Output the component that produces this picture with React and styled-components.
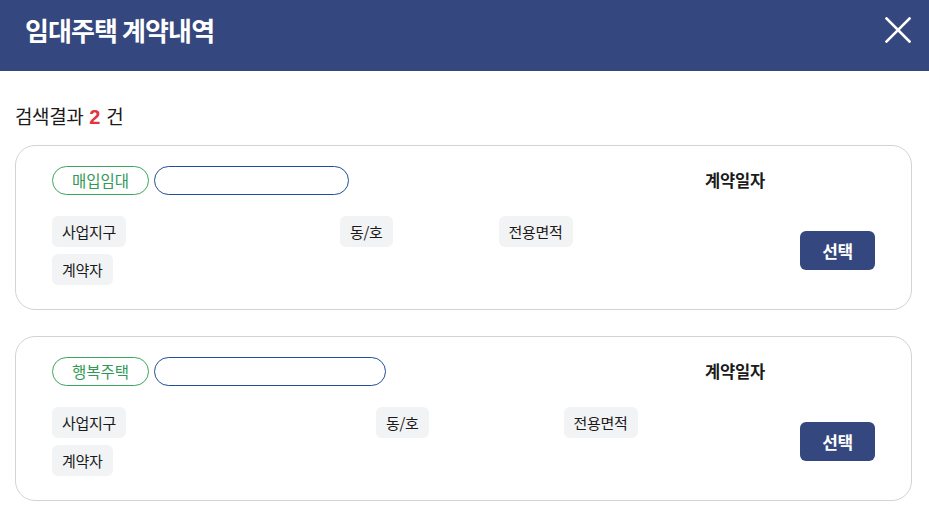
import React from 'react';
import styled, { createGlobalStyle } from 'styled-components';

const GlobalStyle = createGlobalStyle`
  body {
    margin: 0;
    background: #fff;
    font-family: "Noto Sans CJK KR", "Noto Sans", sans-serif;
    color: #1a1a1a;
  }
`;

const Header = styled.header`
  height: 71px;
  box-sizing: border-box;
  padding: 0 17px 12px 25px;
  background: #34477e;
  display: flex;
  align-items: center;
  justify-content: space-between;
`;

const Title = styled.h1`
  margin: 0;
  color: #fff;
  font-size: 26px;
  font-weight: 700;
  letter-spacing: -0.9px;
  line-height: 30px;
`;

const CloseButton = styled.button`
  width: 28px;
  height: 28px;
  padding: 0;
  border: 0;
  background: none;
  display: flex;
  align-items: center;
  justify-content: center;
`;

const Content = styled.main`
  padding: 32px 17px 0 15px;
`;

const ResultText = styled.p`
  margin: 0 0 15px;
  font-size: 19px;
  line-height: 26px;
  letter-spacing: -0.4px;
  color: #1a1a1a;
  word-spacing: 2px;
`;

const Count = styled.strong`
  color: #e5343d;
  font-family: "Liberation Sans", sans-serif;
  font-weight: 700;
  font-size: 20px;
  letter-spacing: 0;
`;

const CardList = styled.div`
  display: flex;
  flex-direction: column;
  gap: 26px;
`;

const Card = styled.section`
  border: 1px solid #d3d3d3;
  border-radius: 20px;
  padding: 20px 36px 24px 36px;
  display: grid;
  grid-template-columns: 1fr 170px;
  row-gap: 21px;
`;

const PillRow = styled.div`
  display: flex;
  gap: 5px;
`;

const TypePill = styled.span`
  box-sizing: border-box;
  height: 29px;
  padding: 0 19px;
  border: 1px solid #3da65e;
  border-radius: 15px;
  color: #2f9a55;
  font-size: 15.5px;
  line-height: 27px;
`;

const NamePill = styled.span`
  box-sizing: border-box;
  height: 29px;
  width: ${({ width }) => width}px;
  border: 1px solid #1f4f9b;
  border-radius: 15px;
`;

const DateLabel = styled.div`
  font-size: 16.5px;
  font-weight: 700;
  line-height: 29px;
  letter-spacing: -0.2px;
  color: #1a1a1a;
`;

const InfoRows = styled.div`
  display: flex;
  flex-direction: column;
  gap: 7px;
`;

const InfoRow = styled.div`
  display: flex;
`;

const Field = styled.div`
  display: flex;
  align-items: center;
`;

const Chip = styled.span`
  height: 31px;
  padding: 0 10px;
  border-radius: 6px;
  background: #f2f3f5;
  font-size: 15px;
  line-height: 31px;
  letter-spacing: -0.3px;
  color: #1a1a1a;
`;

const Value = styled.span`
  display: inline-block;
  width: ${({ width }) => width || 0}px;
`;

const SelectButton = styled.button`
  justify-self: end;
  align-self: center;
  width: 75px;
  height: 39px;
  border: 0;
  border-radius: 6px;
  background: #34477e;
  color: #fff;
  font-family: inherit;
  font-size: 17px;
  font-weight: 700;
  letter-spacing: -0.3px;
`;

const contracts = [
  { type: '매입임대', nameWidth: 195, districtWidth: 214, unitWidth: 106 },
  { type: '행복주택', nameWidth: 232, districtWidth: 250, unitWidth: 135 },
];

const CloseIcon = () => (
  <svg width="26" height="26" viewBox="0 0 26 26" fill="none">
    <path d="M1.5 1.5L24.5 24.5M24.5 1.5L1.5 24.5" stroke="#fff" strokeWidth="2.6" strokeLinecap="square" />
  </svg>
);

const ContractCard = ({ type, nameWidth, districtWidth, unitWidth }) => (
  <Card>
    <PillRow>
      <TypePill>{type}</TypePill>
      <NamePill width={nameWidth} />
    </PillRow>
    <DateLabel>계약일자</DateLabel>
    <InfoRows>
      <InfoRow>
        <Field>
          <Chip>사업지구</Chip>
          <Value width={districtWidth} />
        </Field>
        <Field>
          <Chip>동/호</Chip>
          <Value width={unitWidth} />
        </Field>
        <Field>
          <Chip>전용면적</Chip>
          <Value />
        </Field>
      </InfoRow>
      <InfoRow>
        <Field>
          <Chip>계약자</Chip>
          <Value />
        </Field>
      </InfoRow>
    </InfoRows>
    <SelectButton>선택</SelectButton>
  </Card>
);

const App = () => (
  <>
    <GlobalStyle />
    <Header>
      <Title>임대주택 계약내역</Title>
      <CloseButton aria-label="닫기">
        <CloseIcon />
      </CloseButton>
    </Header>
    <Content>
      <ResultText>
        검색결과 <Count>2</Count> 건
      </ResultText>
      <CardList>
        {contracts.map((c) => (
          <ContractCard key={c.type} {...c} />
        ))}
      </CardList>
    </Content>
  </>
);

export default App;
